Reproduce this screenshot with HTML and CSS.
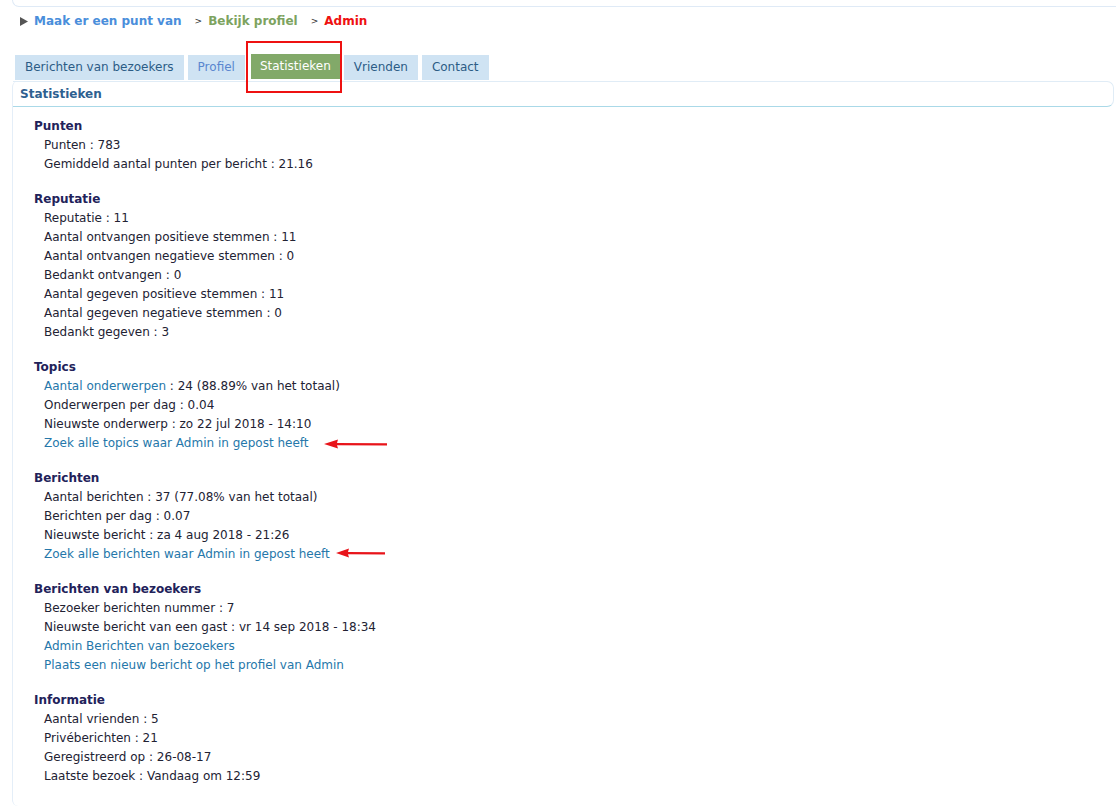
FILE: index.html
```html
<!DOCTYPE html>
<html>
<head>
<meta charset="utf-8">
<link rel="stylesheet" href="styles.css">
</head>
<body>
<div class="topbox"></div>
<div class="breadcrumb">
  <svg class="tri" width="8" height="9" viewBox="0 0 8 9"><polygon points="0,0 8,4.5 0,9" fill="#555"/></svg>
  <a class="bc-home">Maak er een punt van</a>
  <span class="sep">&gt;</span>
  <a class="bc-profile">Bekijk profiel</a>
  <span class="sep">&gt;</span>
  <a class="bc-admin">Admin</a>
</div>
<div class="tabs">
  <span class="tab">Berichten van bezoekers</span>
  <span class="tab tab-light">Profiel</span>
  <span class="tab tab-active">Statistieken</span>
  <span class="tab">Vrienden</span>
  <span class="tab">Contact</span>
</div>
<div class="panel">
  <div class="panel-head">Statistieken</div>
  <div class="content">
    <div class="section">
      <div class="h">Punten</div>
      <div class="row">Punten : 783</div>
      <div class="row">Gemiddeld aantal punten per bericht : 21.16</div>
    </div>
    <div class="section">
      <div class="h">Reputatie</div>
      <div class="row">Reputatie : 11</div>
      <div class="row">Aantal ontvangen positieve stemmen : 11</div>
      <div class="row">Aantal ontvangen negatieve stemmen : 0</div>
      <div class="row">Bedankt ontvangen : 0</div>
      <div class="row">Aantal gegeven positieve stemmen : 11</div>
      <div class="row">Aantal gegeven negatieve stemmen : 0</div>
      <div class="row">Bedankt gegeven : 3</div>
    </div>
    <div class="section">
      <div class="h">Topics</div>
      <div class="row"><a class="link">Aantal onderwerpen</a> : 24 (88.89% van het totaal)</div>
      <div class="row">Onderwerpen per dag : 0.04</div>
      <div class="row">Nieuwste onderwerp : zo 22 jul 2018 - 14:10</div>
      <div class="row"><a class="link">Zoek alle topics waar Admin in gepost heeft</a><svg class="arrow arrow1" width="64" height="10" viewBox="0 0 64 10"><polygon points="0,5 14,0.5 13,4 63,4.2 63,6.6 13,6.2 14,9.5" fill="#e8141a"/></svg></div>
    </div>
    <div class="section">
      <div class="h">Berichten</div>
      <div class="row">Aantal berichten : 37 (77.08% van het totaal)</div>
      <div class="row">Berichten per dag : 0.07</div>
      <div class="row">Nieuwste bericht : za 4 aug 2018 - 21:26</div>
      <div class="row"><a class="link">Zoek alle berichten waar Admin in gepost heeft</a><svg class="arrow arrow2" width="50" height="10" viewBox="0 0 50 10"><polygon points="0,5 13,0.5 12,4 49,4.2 49,6.4 12,6.2 13,9.5" fill="#e8141a"/></svg></div>
    </div>
    <div class="section">
      <div class="h">Berichten van bezoekers</div>
      <div class="row">Bezoeker berichten nummer : 7</div>
      <div class="row">Nieuwste bericht van een gast : vr 14 sep 2018 - 18:34</div>
      <div class="row"><a class="link">Admin Berichten van bezoekers</a></div>
      <div class="row"><a class="link">Plaats een nieuw bericht op het profiel van Admin</a></div>
    </div>
    <div class="section">
      <div class="h">Informatie</div>
      <div class="row">Aantal vrienden : 5</div>
      <div class="row">Privéberichten : 21</div>
      <div class="row">Geregistreerd op : 26-08-17</div>
      <div class="row">Laatste bezoek : Vandaag om 12:59</div>
    </div>
  </div>
</div>
</body>
</html>
```

FILE: styles.css
```css
html, body {
  margin: 0;
  padding: 0;
  background: #ffffff;
}
body {
  font-family: "DejaVu Sans", Verdana, sans-serif;
  font-size: 12px;
  color: #222233;
  width: 1116px;
  height: 807px;
  overflow: hidden;
}
.topbox {
  height: 6px;
  margin-left: 12px;
  border-left: 1px solid #dfeaf6;
  border-bottom: 1px solid #dfeaf6;
  border-bottom-left-radius: 8px;
}
.breadcrumb {
  display: flex;
  align-items: center;
  height: 19px;
  margin-top: 4px;
  padding-left: 20px;
  font-weight: bold;
}
.tri {
  margin-right: 6px;
  margin-top: 1px;
}
.bc-home { color: #4a8edb; }
.bc-profile { color: #7da35f; }
.bc-admin { color: #ee1111; }
.sep {
  font-size: 9px;
  font-weight: normal;
  color: #333;
  margin: 1px 6px 0 13px;
}
.tabs {
  display: flex;
  align-items: flex-start;
  gap: 4px;
  margin-top: 25px;
  padding-left: 15px;
  height: 26px;
}
.tab {
  display: block;
  height: 25px;
  line-height: 25px;
  padding: 0 10px;
  background: #cfe3f3;
  color: #2c5c86;
  white-space: nowrap;
}
.tab-light { color: #5a86cf; }
.tab-active {
  position: relative;
  background: #82a969;
  color: #ffffff;
  margin: -1px 0 0 2px;
  padding: 0 9px;
}
.tab-active::after {
  content: "";
  position: absolute;
  left: -5px;
  top: -13px;
  width: 92px;
  height: 48px;
  border: 2px solid #ee1111;
}
.panel {
  margin: 0 2px 0 12px;
  border-left: 1px solid #e4eef8;
  border-top-left-radius: 6px;
  border-bottom-left-radius: 6px;
  height: 725px;
}
.panel-head {
  height: 24px;
  line-height: 24px;
  padding-left: 7px;
  border: 1px solid #e0ecf6;
  border-left: none;
  border-bottom-color: #aad9e8;
  border-radius: 0 7px 7px 0;
  font-weight: bold;
  color: #2e6090;
}
.content {
  padding: 10px 0 0 21px;
}
.section {
  margin-bottom: 16px;
}
.h {
  font-weight: bold;
  color: #22225a;
  line-height: 19px;
}
.row {
  line-height: 19px;
  padding-left: 10px;
  display: flex;
  align-items: center;
  white-space: pre;
}
.link {
  color: #2577aa;
}
.arrow {
  display: block;
}
.arrow1 { margin-left: 15px; margin-top: 1px; }
.arrow2 { margin-left: 6px; margin-top: -4px; }
```
